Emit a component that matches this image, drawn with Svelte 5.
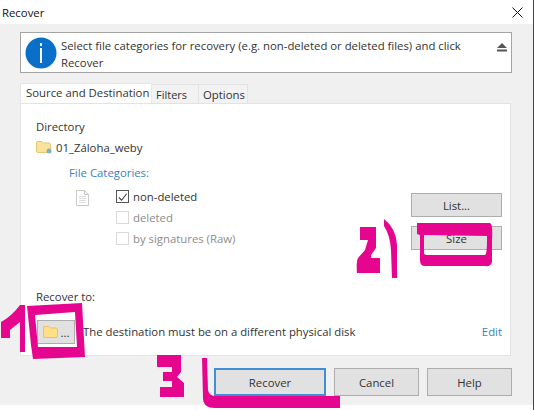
<script>
  const categories = [
    { label: 'non-deleted', checked: true, disabled: false },
    { label: 'deleted', checked: false, disabled: true },
    { label: 'by signatures (Raw)', checked: false, disabled: true }
  ];
</script>

<div class="window">
  <header class="titlebar">
    <span>Recover</span>
    <svg class="close" viewBox="0 0 11 11" width="11" height="11"><path d="M0.5 0.5 L10.5 10.5 M10.5 0.5 L0.5 10.5" stroke="#111" stroke-width="1" fill="none"/></svg>
  </header>

  <main class="body">
    <section class="info">
      <svg class="info-icon" viewBox="0 0 32 32" width="32" height="32">
        <circle cx="16" cy="16" r="15.5" fill="#0a6fc9"/>
        <rect x="15" y="6" width="2" height="3" fill="#fff"/>
        <rect x="15" y="11" width="2" height="15" fill="#fff"/>
      </svg>
      <p>Select file categories for recovery (e.g. non-deleted or deleted files) and click Recover</p>
      <svg class="eject" viewBox="0 0 10 9" width="10" height="9"><path d="M5 0 L10 5 H0 Z M0 6.5 H10 V8.5 H0 Z" fill="#555"/></svg>
    </section>

    <nav class="tabs">
      <span class="tab active">Source and Destination</span>
      <span class="tab filters">Filters</span>
      <span class="tab options">Options</span>
    </nav>

    <section class="panel">
      <div class="heading">Directory</div>
      <div class="dir">
        <svg viewBox="0 0 16 14" width="16" height="14">
          <path d="M0.5 3 Q0.5 1.5 2 1.5 H6 L7.5 3 H13 Q14.5 3 14.5 4.5 V11 Q14.5 12.5 13 12.5 H2 Q0.5 12.5 0.5 11 Z" fill="#f9e29a" stroke="#e2bf62" stroke-width="0.8"/>
          <circle cx="13" cy="11" r="2.5" fill="#7fb2c9"/>
        </svg>
        <span>01_Záloha_weby</span>
      </div>
      <div class="cat-title">File Categories:</div>

      <div class="middle">
        <svg class="file" viewBox="0 0 13 16" width="13" height="16">
          <path d="M0.5 0.5 H8.5 L12.5 4.5 V15.5 H0.5 Z" fill="#fff" stroke="#c9c9c9"/>
          <path d="M8.5 0.5 V4.5 H12.5" fill="none" stroke="#c9c9c9"/>
          <path d="M3 6.5 H10 M3 8.5 H10 M3 10.5 H10 M3 12.5 H10" stroke="#dcdcdc"/>
        </svg>
        <div class="checks">
          {#each categories as c}
            <label class:disabled={c.disabled}>
              <span class="box">
                {#if c.checked}
                  <svg viewBox="0 0 12 12" width="12" height="12"><path d="M2 6.5 L5 9.5 L10.5 2.5" fill="none" stroke="#333" stroke-width="1.1"/></svg>
                {/if}
              </span>
              {c.label}
            </label>
          {/each}
        </div>
        <div class="side">
          <button class="btn side-btn">List...</button>
          <button class="btn side-btn">Size</button>
        </div>
      </div>

      <div class="heading to">Recover to:</div>
      <div class="dest">
        <button class="btn browse">
          <svg viewBox="0 0 16 14" width="16" height="14">
            <path d="M0.5 3 Q0.5 1.5 2 1.5 H6 L7.5 3 H13 Q14.5 3 14.5 4.5 V11 Q14.5 12.5 13 12.5 H2 Q0.5 12.5 0.5 11 Z" fill="#fbe088" stroke="#e5bb55" stroke-width="0.8"/>
          </svg>
          <span>...</span>
        </button>
        <span class="dest-text">The destination must be on a different physical disk</span>
        <span class="edit">Edit</span>
      </div>
    </section>

    <footer class="actions">
      <button class="btn action primary">Recover</button>
      <button class="btn action small">Cancel</button>
      <button class="btn action small">Help</button>
    </footer>
  </main>

  <svg class="ink" viewBox="0 0 534 410" width="534" height="410" fill="#e6058f" fill-rule="evenodd">
    <path d="M1 338 V322 Q12 316 20 305 H25 V352 H20 V322 L10 330 V338 Z"/>
    <path d="M27 306 L82 303 L85 357 L33 359 L31 345 Z M35 315 L38 347 L77 347 L75 312 Z"/>
    <path d="M157 355 H181 V372 L177 377 L184 383 V397 H160 V387 H172 V381 H163 V372 H172 V367 H157 Z"/>
    <path d="M202 358 H207 L208 390 Q209 396 216 396 H340 V408 H215 Q203 408 203 398 Z"/>
    <path d="M360 227 H376 V248 L371 255 V258 H380 V273 H357 Q356 262 358 258 L365 250 L368 240 H360 Z"/>
    <path d="M384 219 Q396 228 397 245 V278 H392 L391 250 Q390 235 384 226 Z"/>
    <path d="M417 223 H490 Q493 224 492 240 V262 Q491 267 485 266 H425 Q420 266 420 260 V235 L417 234 Z M424 235 V253 Q424 255 428 255 H485 Q487 254 487 240 V236 Z"/>
  </svg>
</div>

<style>
  :global(body) {
    margin: 0;
    background: #fff;
  }
  .window {
    position: relative;
    width: 534px;
    height: 410px;
    box-sizing: border-box;
    border-right: 1px solid #444;
    font-family: "Open Sans", "Noto Sans", sans-serif;
    font-size: 11.35px;
    color: #333;
    overflow: hidden;
  }
  .titlebar {
    height: 24px;
    padding: 0 10px 0 2px;
    display: flex;
    align-items: center;
    justify-content: space-between;
    color: #111;
    background: #fff;
  }
  .close { display: block; }
  .body {
    height: 381px;
    box-sizing: border-box;
    padding: 8px 21px 0 20px;
    background: #f0f0f0;
    display: flex;
    flex-direction: column;
  }
  .info {
    height: 41px;
    box-sizing: border-box;
    border: 1px solid #a4a4a4;
    background: #fff;
    display: flex;
    align-items: flex-start;
    gap: 4px;
    padding: 4px 4px 0 4px;
  }
  .info-icon { flex: none; }
  .info p {
    margin: 0;
    width: 420px;
    line-height: 17px;
  }
  .eject { margin: 6px 0 0 auto; }
  .tabs {
    display: flex;
    align-items: flex-end;
    height: 20px;
    margin-top: 10px;
  }
  .tab {
    box-sizing: border-box;
    height: 19px;
    line-height: 20px;
    padding-left: 4px;
    background: #f2f2f2;
    border: 1px solid #e3e3e3;
    border-bottom: none;
  }
  .tab.active {
    width: 132px;
    height: 20px;
    line-height: 18px;
    padding-left: 5px;
    background: #fff;
    border-color: #e6e6e6;
  }
  .tab.filters { width: 47px; border-left: none; font-size: 11px; }
  .tab.options { width: 49px; border-left: none; }
  .panel {
    height: 253px;
    box-sizing: border-box;
    margin-right: 1px;
    background: #fff;
    border: 1px solid #e3e3e3;
    padding: 15px 8px 0 15px;
    display: flex;
    flex-direction: column;
  }
  .heading { line-height: 16px; }
  .dir {
    display: flex;
    align-items: center;
    gap: 4px;
    margin-top: 4px;
    height: 16px;
  }
  .cat-title {
    margin: 10px 0 0 33px;
    line-height: 16px;
    color: #3a7fc0;
  }
  .middle {
    display: flex;
    align-items: flex-start;
    padding-left: 40px;
    margin-top: 9px;
    height: 90px;
  }
  .checks {
    display: flex;
    flex-direction: column;
    gap: 8px;
    margin-left: 27px;
  }
  label {
    display: flex;
    align-items: center;
    gap: 4px;
    height: 13px;
  }
  label.disabled { color: #8c8c8c; }
  .box {
    width: 11px;
    height: 11px;
    border: 1px solid #555;
    background: #fff;
    display: flex;
    align-items: center;
    justify-content: center;
  }
  label.disabled .box { border-color: #d9d9d9; }
  .side {
    margin: 3px 0 0 auto;
    display: flex;
    flex-direction: column;
    gap: 9px;
  }
  .btn {
    box-sizing: border-box;
    background: #e1e1e1;
    border: 1px solid #adadad;
    font: inherit;
    color: #333;
    padding: 0;
  }
  .side-btn {
    width: 91px;
    height: 24px;
  }
  .to { margin-top: 9px; }
  .dest {
    display: flex;
    align-items: center;
    margin-top: 15px;
    height: 24px;
  }
  .browse {
    width: 38px;
    height: 24px;
    display: flex;
    align-items: center;
    justify-content: center;
    gap: 2px;
    margin-left: 1px;
  }
  .dest-text { margin-left: 8px; padding-bottom: 2px; }
  .edit { margin-left: auto; padding-bottom: 2px; color: #3a7fc0; }
  .actions {
    display: flex;
    justify-content: flex-end;
    gap: 8px;
    margin-top: 12px;
  }
  .action { height: 28px; }
  .primary {
    width: 112px;
    border: 2px solid #3f8fd2;
  }
  .small { width: 85px; }
  .ink {
    position: absolute;
    left: 0;
    top: 0;
    pointer-events: none;
  }
</style>
